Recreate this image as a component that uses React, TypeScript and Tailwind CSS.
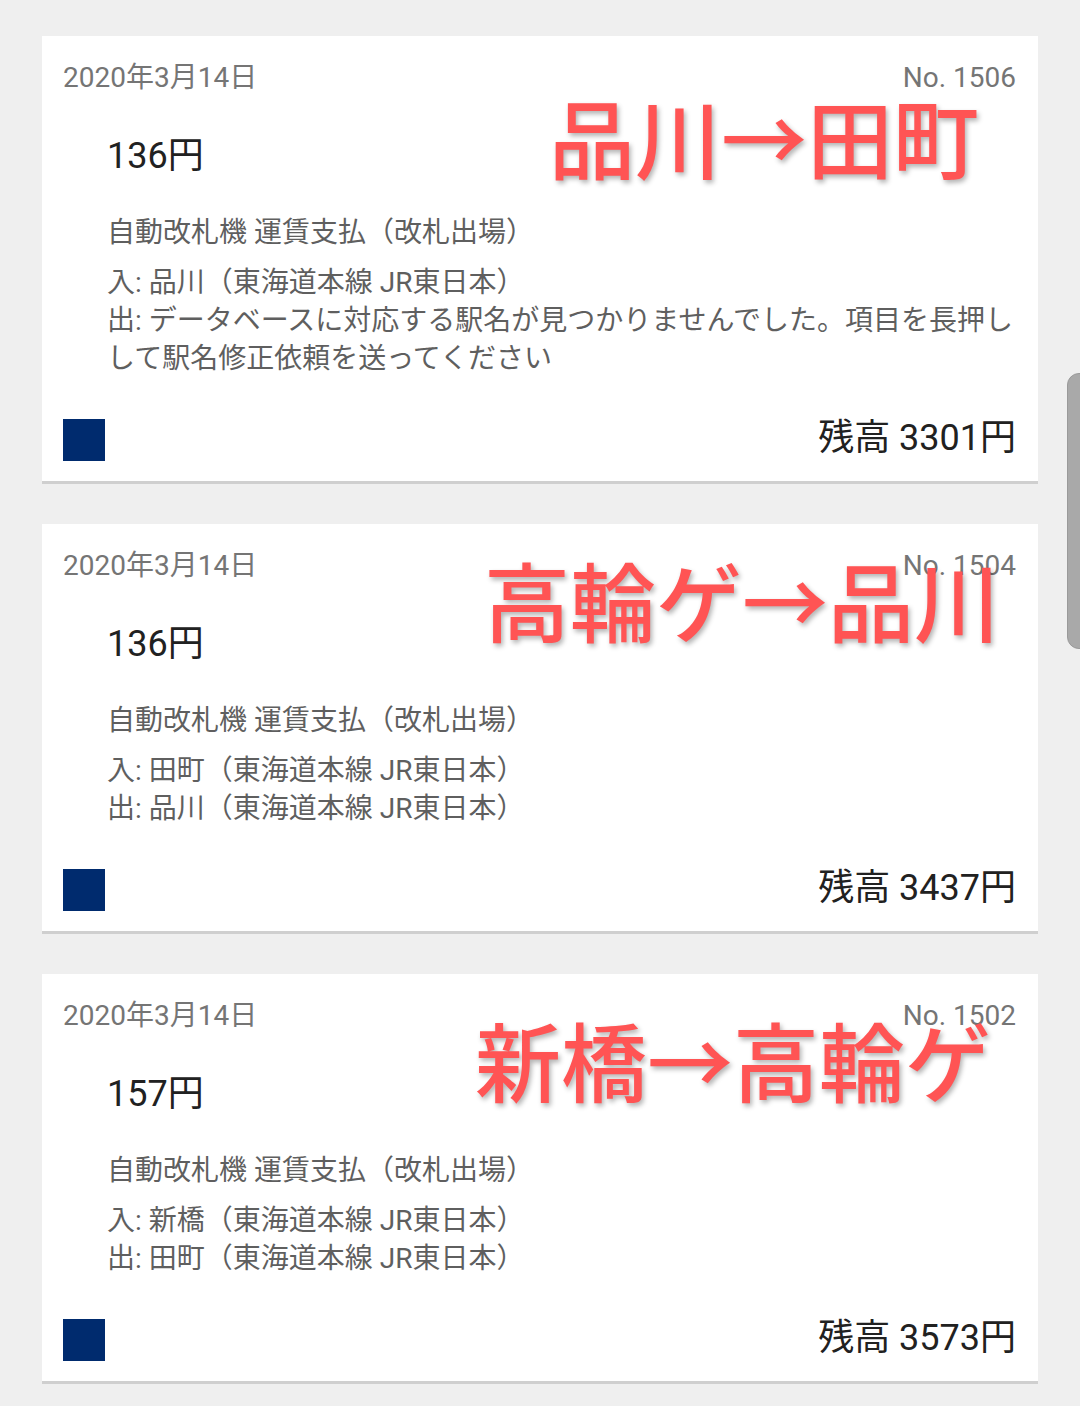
import React from "react";

type RideProps = {
  no: string;
  amount: string;
  entry: string;
  exit: React.ReactNode;
  balance: string;
  overlay: string;
  overlayClass: string;
};

const rides: RideProps[] = [
  {
    no: "1506",
    amount: "136円",
    entry: "品川（東海道本線 JR東日本）",
    exit: (
      <>
        データベースに対応する駅名が見つかりませんでした。項目を長押し
        <br />
        して駅名修正依頼を送ってください
      </>
    ),
    balance: "3301円",
    overlay: "品川→田町",
    overlayClass: "left-[507px] top-[50px]",
  },
  {
    no: "1504",
    amount: "136円",
    entry: "田町（東海道本線 JR東日本）",
    exit: "品川（東海道本線 JR東日本）",
    balance: "3437円",
    overlay: "高輪ゲ→品川",
    overlayClass: "left-[442px] top-[25px]",
  },
  {
    no: "1502",
    amount: "157円",
    entry: "新橋（東海道本線 JR東日本）",
    exit: "田町（東海道本線 JR東日本）",
    balance: "3573円",
    overlay: "新橋→高輪ゲ",
    overlayClass: "left-[433px] top-[35px]",
  },
];

function RideCard({ no, amount, entry, exit, balance, overlay, overlayClass }: RideProps) {
  return (
    <div className="relative bg-white border-b-[3px] border-[#cfcfcf] pt-[24px] pb-[20px] pl-[21px] pr-[22px]">
      {/* date + number */}
      <div className="flex justify-between text-[28px] leading-[36px] text-[#757575]">
        <span>2020年3月14日</span>
        <span>No. {no}</span>
      </div>

      {/* amount */}
      <div className="mt-[36px] pl-[44px] text-[36px] leading-[48px] text-[#212121]">{amount}</div>

      {/* details */}
      <div className="mt-[34px] pl-[44px] text-[28px] leading-[38px] text-[#5f5f5f]">
        <div>自動改札機 運賃支払（改札出場）</div>
        <div className="mt-[12px]">入: {entry}</div>
        <div>出: {exit}</div>
      </div>

      {/* bottom row */}
      <div className="mt-[41px] flex items-center justify-between">
        <div className="w-[42px] h-[42px] bg-[#002b6e]" />
        <span className="text-[36px] leading-[42px] -mt-[5px] text-[#212121]">残高 {balance}</span>
      </div>

      {/* red annotation */}
      <div
        className={`absolute ${overlayClass} text-[86px] leading-[100px] font-medium text-[#ff5454] whitespace-nowrap [text-shadow:2px_3px_5px_rgba(0,0,0,0.3)]`}
        style={{ fontFamily: "'Noto Sans CJK JP', sans-serif" }}
      >
        {overlay}
      </div>
    </div>
  );
}

export default function App() {
  return (
    <div
      className="relative w-[1080px] h-[1406px] overflow-hidden bg-[#efefef]"
      style={{ fontFamily: "Roboto, 'Noto Sans CJK JP', sans-serif" }}
    >
      <div className="flex flex-col gap-[40px] pt-[36px] pl-[42px] w-[1038px]">
        {rides.map((r) => (
          <RideCard key={r.no} {...r} />
        ))}
      </div>

      {/* scrollbar thumb */}
      <div className="absolute left-[1067px] top-[373px] w-[20px] h-[276px] rounded-l-[12px] bg-[#a9a9a9] border border-[#9a9a9a]" />
    </div>
  );
}
